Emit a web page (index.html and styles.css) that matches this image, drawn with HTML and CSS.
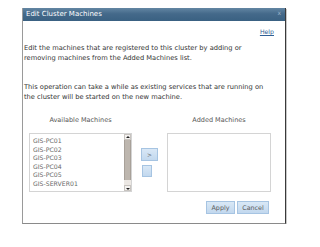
FILE: index.html
```html
<!DOCTYPE html>
<html>
<head>
<meta charset="utf-8">
<title>Edit Cluster Machines</title>
<link rel="stylesheet" href="styles.css">
</head>
<body>
<div id="EditCluster" class="dialog">
  <div class="titlebar">
    <span class="title">Edit Cluster Machines</span>
    <span class="close">x</span>
  </div>
  <div class="content">
    <div class="helprow"><a href="#" class="help">Help</a></div>
    <p class="msg">Edit the machines that are registered to this cluster by adding or<br>removing machines from the Added Machines list.</p>
    <p class="msg second">This operation can take a while as existing services that are running on<br>the cluster will be started on the new machine.</p>
    <div class="pickers">
      <div class="label">Available Machines</div>
      <div></div>
      <div class="label">Added Machines</div>
      <div class="listbox">
        <div class="items">
          <div>GIS-PC01</div>
          <div>GIS-PC02</div>
          <div>GIS-PC03</div>
          <div>GIS-PC04</div>
          <div>GIS-PC05</div>
          <div>GIS-SERVER01</div>
        </div>
        <div class="scroll">
          <div class="arrow up"></div>
          <div class="thumb"></div>
          <div class="track"></div>
          <div class="arrow down"></div>
        </div>
      </div>
      <div class="movebtns">
        <button class="btn add">&gt;</button>
        <button class="btn remove"></button>
      </div>
      <div class="listbox"></div>
    </div>
    <div class="actions">
      <button class="btn apply">Apply</button>
      <button class="btn cancel">Cancel</button>
    </div>
  </div>
</div>
</body>
</html>
```

FILE: styles.css
```css
body {margin:0; padding:0; background-color:white;}
* {font-family:"DejaVu Sans",Verdana,sans-serif;}
.dialog {
width:262px;
height:215px;
margin:8px 0 0 22px;
border:1px solid #9a9a9a;
border-top:0;
border-right-color:#3a3a3a;
border-bottom-color:#8a8a8a;
box-shadow:1px 1px 0 #c8c8c8;
display:flex;
flex-direction:column;
}
.titlebar {
height:13px;
display:flex;
align-items:center;
justify-content:space-between;
padding:0 4px 0 3px;
background:linear-gradient(#6386a3, #44698a 45%, #3a6182);
}
.titlebar .title {color:white; font-size:7px; line-height:13px;}
.titlebar .close {color:#9fb4c8; font-size:6px; line-height:8px; align-self:flex-start; margin-top:1px;}
.content {padding:0 0 0 1px;}
.helprow {text-align:right; padding-right:11px; margin-top:3px; line-height:10px;}
.help {color:#2f5f95; font-size:6.2px; text-decoration:underline;}
.msg {margin:6px 0 0 0; font-size:6.7px; line-height:10px; color:#333;}
.msg.second {margin-top:19px;}
.pickers {
display:grid;
grid-template-columns:103px 17px 104px;
column-gap:9px;
margin:13px 0 0 5px;
}
.pickers > div:nth-child(2) {margin-right:-1px;}
.label {text-align:center; font-size:6.5px; line-height:10px; color:#555; margin-bottom:8px;}
.listbox {
height:57px;
border:1px solid #d4d4d4;
display:flex;
background-color:white;
}
.items {flex:1; padding:3px 0 0 3px; font-size:6.2px; line-height:8.6px; color:#6a6a6a;}
.scroll {width:7px; display:flex; flex-direction:column; background-color:#ece8e4;}
.scroll .arrow {height:6px; background-color:#f4f2f0; border:1px solid #c8c4c0; box-sizing:border-box; position:relative;}
.scroll .arrow:after {
content:"";
position:absolute;
left:1px;
border-left:2px solid transparent;
border-right:2px solid transparent;
}
.scroll .up:after {top:1px; border-bottom:2px solid #222;}
.scroll .down:after {top:2px; border-top:2px solid #222;}
.scroll .thumb {height:40px; background-color:#bdb6ae; border:1px solid #a8a199; border-width:0 1px; }
.scroll .track {flex:1;}
.movebtns {display:flex; flex-direction:column; align-items:flex-start; padding-top:15px;}
.btn {
padding:0;
margin:0;
border:1px solid #a6c4e2;
background:linear-gradient(#d9e8f6, #c2d8ee);
color:#5b5b5b;
font-size:6.4px;
box-sizing:border-box;
}
.btn.add {width:17px; height:13px; font-size:6px;}
.btn.remove {width:10px; height:12px; margin:4px 0 0 1px;}
.actions {display:flex; justify-content:flex-end; column-gap:2px; margin:9px 16px 0 0;}
.btn.apply {width:29px; height:13px;}
.btn.cancel {width:32px; height:13px;}
```
